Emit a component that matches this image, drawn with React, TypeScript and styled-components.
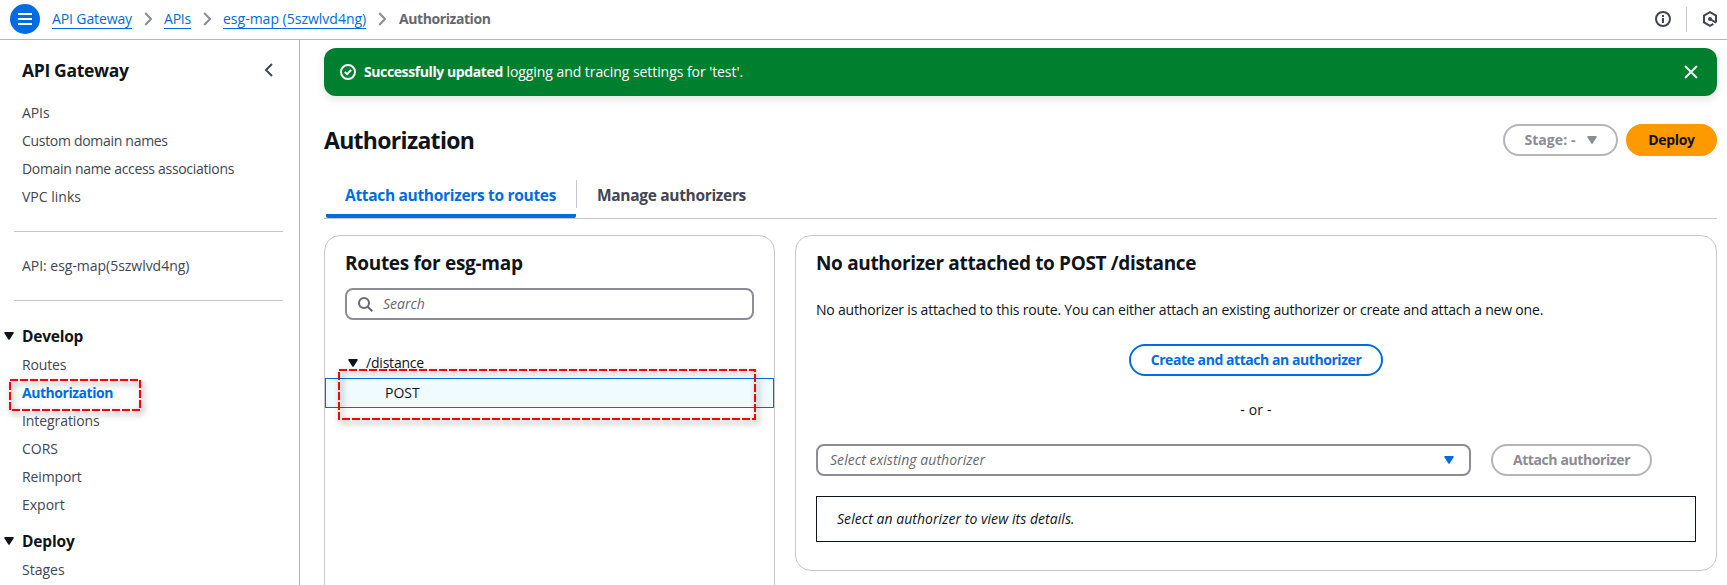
import React from 'react';
import styled, { createGlobalStyle } from 'styled-components';

const GlobalStyle = createGlobalStyle`
  *, *::before, *::after { box-sizing: border-box; }
  body {
    margin: 0;
    overflow: hidden;
    background: #fff;
    color: #0f141a;
    font: 400 14px/20px "Open Sans", "Noto Sans", sans-serif;
  }
  h1, h2, p { margin: 0; }
`;

type Tracking = { $track?: number };

const Page = styled.div`
  display: flex;
  flex-direction: column;
  height: 585px;
  overflow: hidden;
`;

const TopBar = styled.header`
  display: flex;
  align-items: center;
  flex: none;
  height: 40px;
  padding: 0 10px 1px;
  border-bottom: 1px solid #b4b4bb;
`;

const MenuButton = styled.button`
  display: grid;
  place-items: center;
  width: 30px;
  height: 30px;
  margin-right: 12px;
  padding: 0;
  border: 0;
  border-radius: 50%;
  background: #006ce0;
`;

const Crumbs = styled.nav`
  display: flex;
  align-items: center;
  flex: 1;
`;

const CrumbLink = styled.a<Tracking & { $width: number }>`
  width: ${p => p.$width}px;
  height: 20px;
  border-bottom: 1px solid #006ce0;
  color: #006ce0;
  line-height: 19px;
  white-space: nowrap;
  letter-spacing: ${p => p.$track ?? 0}px;
`;

const CrumbCurrent = styled.span`
  padding-left: 1px;
  height: 20px;
  color: #656871;
  font-weight: 700;
  line-height: 19px;
  letter-spacing: -0.42px;
`;

const CrumbArrow = styled.svg`
  width: 8px;
  height: 14px;
  margin: 0 12px;
`;

const TopTools = styled.div`
  display: flex;
  align-items: center;
  height: 100%;
`;

const ToolDivider = styled.span`
  width: 1px;
  height: 25px;
  margin: 0 16px 0 15px;
  background: #c6c6cd;
`;

const Body = styled.div`
  display: flex;
  flex: 1;
  min-height: 0;
`;

const Sidebar = styled.aside`
  flex: none;
  width: 300px;
  border-right: 1px solid #b4b4bb;
`;

const SideHeader = styled.div`
  display: flex;
  align-items: center;
  justify-content: space-between;
  height: 59px;
  padding: 0 26px 0 22px;
  font-size: 17.5px;
  font-weight: 700;
  letter-spacing: -0.32px;
`;

const NavList = styled.ul`
  margin: 0;
  padding: 0 0 0 22px;
  list-style: none;
`;

const NavItem = styled.li<Tracking & { $active?: boolean }>`
  position: relative;
  height: 28px;
  line-height: 28px;
  white-space: nowrap;
  color: ${p => (p.$active ? '#006ce0' : '#424650')};
  font-weight: ${p => (p.$active ? 700 : 400)};
  letter-spacing: ${p => p.$track ?? 0}px;
`;

const NavRule = styled.hr`
  width: 269px;
  height: 1px;
  margin: 20px 0 0 14px;
  border: 0;
  background: #c6c6cd;
`;

const ApiName = styled.div`
  height: 48px;
  padding: 20px 0 0 22px;
  color: #424650;
  line-height: 28px;
  letter-spacing: -0.03px;
`;

const NavSection = styled.div<Tracking & { $top: number }>`
  display: flex;
  align-items: center;
  gap: 8px;
  height: 30px;
  margin-top: ${p => p.$top}px;
  padding-left: 4px;
  font-size: 15.5px;
  font-weight: 700;
  letter-spacing: ${p => p.$track ?? 0}px;
`;

const Caret = styled.svg`
  flex: none;
  width: 10px;
  height: 8px;
`;

const Main = styled.main`
  flex: 1;
  min-width: 0;
  padding: 8px 10px 0 24px;
`;

const Flash = styled.div`
  display: flex;
  align-items: center;
  height: 48px;
  padding: 0 19px 0 16px;
  border-radius: 12px;
  background: #00802f;
  box-shadow: 0 4px 8px rgba(0, 7, 22, 0.1);
  color: #fff;
`;

const FlashText = styled.p`
  flex: 1;
  padding-left: 8px;
  letter-spacing: -0.06px;
  strong { font-weight: 700; letter-spacing: -0.4px; }
`;

const TitleRow = styled.div`
  display: flex;
  align-items: center;
  gap: 8px;
  height: 32px;
  margin-top: 28px;
`;

const PageTitle = styled.h1`
  flex: 1;
  padding-bottom: 1px;
  font-size: 23px;
  line-height: 30px;
  font-weight: 700;
  letter-spacing: -0.7px;
`;

const buttonColors = {
  disabled: ['#fff', '#b4b4bb', '#8c8c94'],
  primary: ['#ff9900', '#ff9900', '#0f141a'],
  normal: ['#fff', '#006ce0', '#006ce0'],
};

const Button = styled.button<Tracking & { $kind: keyof typeof buttonColors; $width: number }>`
  display: flex;
  align-items: center;
  justify-content: center;
  gap: 11px;
  flex: none;
  width: ${p => p.$width}px;
  height: 32px;
  padding: 0;
  border: 2px solid ${p => buttonColors[p.$kind][1]};
  border-radius: 16px;
  background: ${p => buttonColors[p.$kind][0]};
  color: ${p => buttonColors[p.$kind][2]};
  font: inherit;
  font-weight: 700;
  white-space: nowrap;
  letter-spacing: ${p => p.$track ?? 0}px;
`;

const Tabs = styled.div`
  display: flex;
  height: 39px;
  margin-top: 24px;
  padding-left: 2px;
  border-bottom: 1px solid #c6c6cd;
`;

const Tab = styled.div<Tracking & { $active?: boolean; $width: number }>`
  width: ${p => p.$width}px;
  height: 38px;
  padding: 5px 0 0 ${p => (p.$active ? 19 : 20)}px;
  border-bottom: 4px solid ${p => (p.$active ? '#006ce0' : 'transparent')};
  border-radius: 2px;
  color: ${p => (p.$active ? '#006ce0' : '#424650')};
  font-size: 15.5px;
  font-weight: 700;
  white-space: nowrap;
  letter-spacing: ${p => p.$track ?? 0}px;
`;

const TabDivider = styled.span`
  width: 1px;
  height: 28px;
  background: #c6c6cd;
`;

const Columns = styled.div`
  display: flex;
  align-items: flex-start;
  gap: 20px;
  margin-top: 16px;
`;

const Card = styled.section<{ $width: number; $height: number }>`
  flex: none;
  width: ${p => p.$width}px;
  height: ${p => p.$height}px;
  border: 1px solid #c6c6cd;
  border-radius: 16px;
  padding-top: 14px;
`;

const CardTitle = styled.h2<Tracking>`
  padding: 0 20px;
  font-size: 19px;
  line-height: 26px;
  font-weight: 700;
  letter-spacing: ${p => p.$track}px;
`;

const Field = styled.div<{ $width: number }>`
  display: flex;
  align-items: center;
  flex: none;
  width: ${p => p.$width}px;
  height: 32px;
  border: 2px solid #8c8c94;
  border-radius: 8px;
  color: #656871;
  font-style: italic;
`;

const SearchField = styled(Field)`
  gap: 10px;
  margin: 12px 0 0 20px;
  padding-left: 11px;
`;

const SelectField = styled(Field)`
  justify-content: space-between;
  padding: 0 15px 0 12px;
  letter-spacing: 0.05px;
`;

const TreeBranch = styled.div`
  display: flex;
  align-items: center;
  gap: 8px;
  height: 30px;
  margin-top: 28px;
  padding-left: 23px;
  letter-spacing: -0.2px;
`;

const RouteRow = styled.div`
  position: relative;
  height: 30px;
  padding-left: 59px;
  border: 1px solid #006ce0;
  background: #f0fbff;
  line-height: 28px;
`;

const Marker = styled.svg<{ $left: number; $top: number }>`
  position: absolute;
  left: ${p => p.$left}px;
  top: ${p => p.$top}px;
  overflow: visible;
  filter: drop-shadow(2px 3px 3px rgba(0, 0, 0, 0.5));
`;

const Details = styled.div`
  display: flex;
  flex-direction: column;
  align-items: center;
  padding: 24px 20px 0;
`;

const Note = styled.p`
  align-self: flex-start;
  white-space: nowrap;
  letter-spacing: -0.19px;
  margin-bottom: 24px;
`;

const OrText = styled.p`
  margin: 24px 0;
  letter-spacing: 0.15px;
`;

const AttachRow = styled.div`
  display: flex;
  align-self: stretch;
  gap: 20px;
`;

const DetailBox = styled.div`
  align-self: stretch;
  height: 46px;
  margin-top: 20px;
  padding-left: 20px;
  border: 1px solid #0f141a;
  font-style: italic;
  line-height: 44px;
  letter-spacing: 0.05px;
`;

function Triangle({ color = '#0f141a' }: { color?: string }) {
  return (
    <Caret viewBox="0 0 10 8">
      <path d="M1 .8h8L5 7z" fill={color} stroke={color} strokeWidth="1.5" strokeLinejoin="round" />
    </Caret>
  );
}

function Separator() {
  return (
    <CrumbArrow viewBox="0 0 8 14">
      <path d="M1.2 1 7 7l-5.8 6" fill="none" stroke="#8c8c94" strokeWidth="2" />
    </CrumbArrow>
  );
}

function DashedMarker({ left, top, width, height }: { left: number; top: number; width: number; height: number }) {
  return (
    <Marker $left={left} $top={top} width={width} height={height}>
      <rect x="1" y="1" width={width - 2} height={height - 2} fill="none" stroke="#f00" strokeWidth="2" strokeDasharray="8 2" />
    </Marker>
  );
}

export default function App() {
  return (
    <Page>
      <GlobalStyle />
      <TopBar>
        <MenuButton aria-label="Menu">
          <svg width="14" height="12" viewBox="0 0 14 12">
            <path d="M0 1h14M0 6h14M0 11h14" stroke="#fff" strokeWidth="2" />
          </svg>
        </MenuButton>
        <Crumbs>
          <CrumbLink $width={80} $track={-0.12}>API Gateway</CrumbLink>
          <Separator />
          <CrumbLink $width={27} $track={-0.2}>APIs</CrumbLink>
          <Separator />
          <CrumbLink $width={143}>esg-map (5szwlvd4ng)</CrumbLink>
          <Separator />
          <CrumbCurrent>Authorization</CrumbCurrent>
        </Crumbs>
        <TopTools>
          <svg width="16" height="16" viewBox="0 0 16 16" fill="none" stroke="#424650" strokeWidth="2">
            <circle cx="8" cy="8" r="7" />
            <path d="M8 4v2M8 7v5" />
          </svg>
          <ToolDivider />
          <svg width="14" height="16" viewBox="0 0 14 16" fill="none" stroke="#424650" strokeWidth="2">
            <path d="M13 11.5V4.5L7 1.2 1 4.5v7l6 3.3 3.4-1.9" />
            <path d="M7 8l6 3.6" />
            <circle cx="7" cy="8" r="2" fill="#424650" stroke="none" />
          </svg>
        </TopTools>
      </TopBar>
      <Body>
        <Sidebar>
          <SideHeader>
            API Gateway
            <svg width="9" height="14" viewBox="0 0 9 14">
              <path d="M8 1 2 7l6 6" fill="none" stroke="#424650" strokeWidth="2" />
            </svg>
          </SideHeader>
          <NavList>
            <NavItem $track={-0.1}>APIs</NavItem>
            <NavItem $track={-0.3}>Custom domain names</NavItem>
            <NavItem $track={-0.31}>Domain name access associations</NavItem>
            <NavItem>VPC links</NavItem>
          </NavList>
          <NavRule />
          <ApiName>API: esg-map(5szwlvd4ng)</ApiName>
          <NavRule />
          <NavSection $top={20} $track={-0.22}><Triangle />Develop</NavSection>
          <NavList>
            <NavItem $track={-0.15}>Routes</NavItem>
            <NavItem $active $track={-0.46}>
              Authorization
              <DashedMarker left={-13} top={0} width={132} height={32} />
            </NavItem>
            <NavItem $track={-0.08}>Integrations</NavItem>
            <NavItem>CORS</NavItem>
            <NavItem $track={-0.12}>Reimport</NavItem>
            <NavItem>Export</NavItem>
          </NavList>
          <NavSection $top={7} $track={-0.15}><Triangle />Deploy</NavSection>
          <NavList>
            <NavItem>Stages</NavItem>
          </NavList>
        </Sidebar>
        <Main>
          <Flash>
            <svg width="16" height="16" viewBox="0 0 16 16" fill="none" stroke="#fff" strokeWidth="2">
              <circle cx="8" cy="8" r="7" />
              <path d="m4.8 8 2.4 2.2 4-4.4" />
            </svg>
            <FlashText><strong>Successfully updated</strong> logging and tracing settings for 'test'.</FlashText>
            <svg width="14" height="14" viewBox="0 0 14 14" fill="none" stroke="#ebebf0" strokeWidth="2">
              <path d="m1 1 12 12M13 1 1 13" />
            </svg>
          </Flash>
          <TitleRow>
            <PageTitle>Authorization</PageTitle>
            <Button $kind="disabled" $width={115} $track={0.08}>Stage: - <Triangle color="#8c8c94" /></Button>
            <Button $kind="primary" $width={91} $track={-0.3}>Deploy</Button>
          </TitleRow>
          <Tabs>
            <Tab $active $width={250} $track={-0.31}>Attach authorizers to routes</Tab>
            <TabDivider />
            <Tab $width={190} $track={-0.32}>Manage authorizers</Tab>
          </Tabs>
          <Columns>
            <Card $width={451} $height={400}>
              <CardTitle $track={-0.3}>Routes for esg-map</CardTitle>
              <SearchField $width={409}>
                <svg width="15" height="15" viewBox="0 0 15 15" fill="none" stroke="#656871" strokeWidth="2">
                  <circle cx="6" cy="6" r="5" />
                  <path d="m9.5 9.5 4.8 4.8" />
                </svg>
                Search
              </SearchField>
              <TreeBranch><Triangle />/distance</TreeBranch>
              <RouteRow>
                POST
                <DashedMarker left={12} top={-10} width={418} height={51} />
              </RouteRow>
            </Card>
            <Card $width={922} $height={336}>
              <CardTitle $track={-0.34}>No authorizer attached to POST /distance</CardTitle>
              <Details>
                <Note>No authorizer is attached to this route. You can either attach an existing authorizer or create and attach a new one.</Note>
                <Button $kind="normal" $width={254} $track={-0.44}>Create and attach an authorizer</Button>
                <OrText>- or -</OrText>
                <AttachRow>
                  <SelectField $width={655}>Select existing authorizer<Triangle color="#006ce0" /></SelectField>
                  <Button $kind="disabled" $width={161} $track={-0.4}>Attach authorizer</Button>
                </AttachRow>
                <DetailBox>Select an authorizer to view its details.</DetailBox>
              </Details>
            </Card>
          </Columns>
        </Main>
      </Body>
    </Page>
  );
}
